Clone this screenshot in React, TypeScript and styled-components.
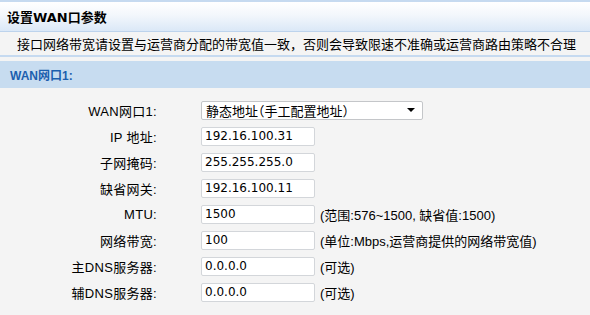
import React from 'react';
import styled, {createGlobalStyle} from 'styled-components';

const GlobalStyle = createGlobalStyle`
  html, body {
    margin: 0;
    padding: 0;
    background: #f4f4f4;
  }
  body {
    font-family: "DejaVu Sans", "Noto Sans CJK SC", sans-serif;
    font-size: 13px;
    color: #000;
  }
`;

const Page = styled.div`
  width: 590px;
  height: 315px;
  overflow: hidden;
  background: #f4f4f4;
  display: flex;
  flex-direction: column;
`;

const TitleBar = styled.div`
  height: 29px;
  border-top: 2px solid #c6daf0;
  border-bottom: 1px solid #bdd3ec;
  background: linear-gradient(#ffffff 0%, #f3f7fc 45%, #dbe8f7 100%);
  display: flex;
  align-items: center;
  padding-left: 7px;
  font-family: "DejaVu Sans", "Noto Sans CJK SC", sans-serif;
  font-weight: 700;
  font-size: 13px;
  color: #000;
`;

const Notice = styled.div`
  height: 23px;
  border-bottom: 2px solid #c6daf0;
  background: #f4f4f4;
  display: flex;
  align-items: center;
  padding-left: 17px;
  font-family: "Noto Sans CJK SC", sans-serif;
  font-size: 13px;
`;

const SectionHeader = styled.div`
  margin-top: 4px;
  height: 27px;
  background: #c7dcf0;
  display: flex;
  align-items: center;
  padding-left: 10px;
  font-family: "Liberation Sans", "Noto Sans CJK SC", sans-serif;
  font-weight: 700;
  font-size: 12px;
  color: #1c5fae;
`;

const Form = styled.div`
  display: grid;
  grid-template-columns: 157px auto auto;
  grid-auto-rows: 26px;
  column-gap: 44px;
  padding-top: 9px;
  align-items: center;
  justify-content: start;
`;

const Label = styled.div`
  text-align: right;
  font-family: "Liberation Sans", "Noto Sans CJK SC", sans-serif;
  font-size: 13px;
  white-space: nowrap;
  letter-spacing: 0.3px;
`;

const Field = styled.div`
  grid-column: 2 / 4;
  display: flex;
  align-items: center;
  gap: 5px;
`;

const Input = styled.div`
  box-sizing: border-box;
  width: 114px;
  height: 19px;
  background: #fff;
  border: 1px solid #d3d6da;
  border-radius: 2px;
  padding-left: 3px;
  display: flex;
  align-items: center;
  font-family: "DejaVu Sans", sans-serif;
  font-size: 12px;
`;

const Select = styled.div`
  box-sizing: border-box;
  width: 222px;
  height: 19px;
  background: #fff;
  border: 1px solid #c4c6c9;
  border-radius: 2px;
  padding: 0 7px 0 4px;
  display: flex;
  align-items: center;
  justify-content: space-between;
  font-family: "Noto Sans CJK SC", sans-serif;
  font-size: 13px;
  font-feature-settings: "halt";
`;

const Caret = styled.span`
  width: 0;
  height: 0;
  border-left: 4px solid transparent;
  border-right: 4px solid transparent;
  border-top: 4px solid #000;
`;

const Hint = styled.span`
  font-family: "Liberation Sans", "Noto Sans CJK SC", sans-serif;
  font-size: 13px;
  white-space: nowrap;
`;

type Row = {label: string; value: string; hint?: string};

const rows: Row[] = [
  {label: 'IP 地址:', value: '192.16.100.31'},
  {label: '子网掩码:', value: '255.255.255.0'},
  {label: '缺省网关:', value: '192.16.100.11'},
  {label: 'MTU:', value: '1500', hint: '(范围:576~1500, 缺省值:1500)'},
  {label: '网络带宽:', value: '100', hint: '(单位:Mbps,运营商提供的网络带宽值)'},
  {label: '主DNS服务器:', value: '0.0.0.0', hint: '(可选)'},
  {label: '辅DNS服务器:', value: '0.0.0.0', hint: '(可选)'},
];

export default function App() {
  return (
    <Page>
      <GlobalStyle />
      <TitleBar>设置WAN口参数</TitleBar>
      <Notice>接口网络带宽请设置与运营商分配的带宽值一致，否则会导致限速不准确或运营商路由策略不合理</Notice>
      <SectionHeader>WAN网口1:</SectionHeader>
      <Form>
        <Label>WAN网口1:</Label>
        <Field>
          <Select>
            <span>静态地址（手工配置地址）</span>
            <Caret />
          </Select>
        </Field>
        {rows.map((r) => (
          <React.Fragment key={r.label}>
            <Label>{r.label}</Label>
            <Field>
              <Input>{r.value}</Input>
              {r.hint && <Hint>{r.hint}</Hint>}
            </Field>
          </React.Fragment>
        ))}
      </Form>
    </Page>
  );
}
